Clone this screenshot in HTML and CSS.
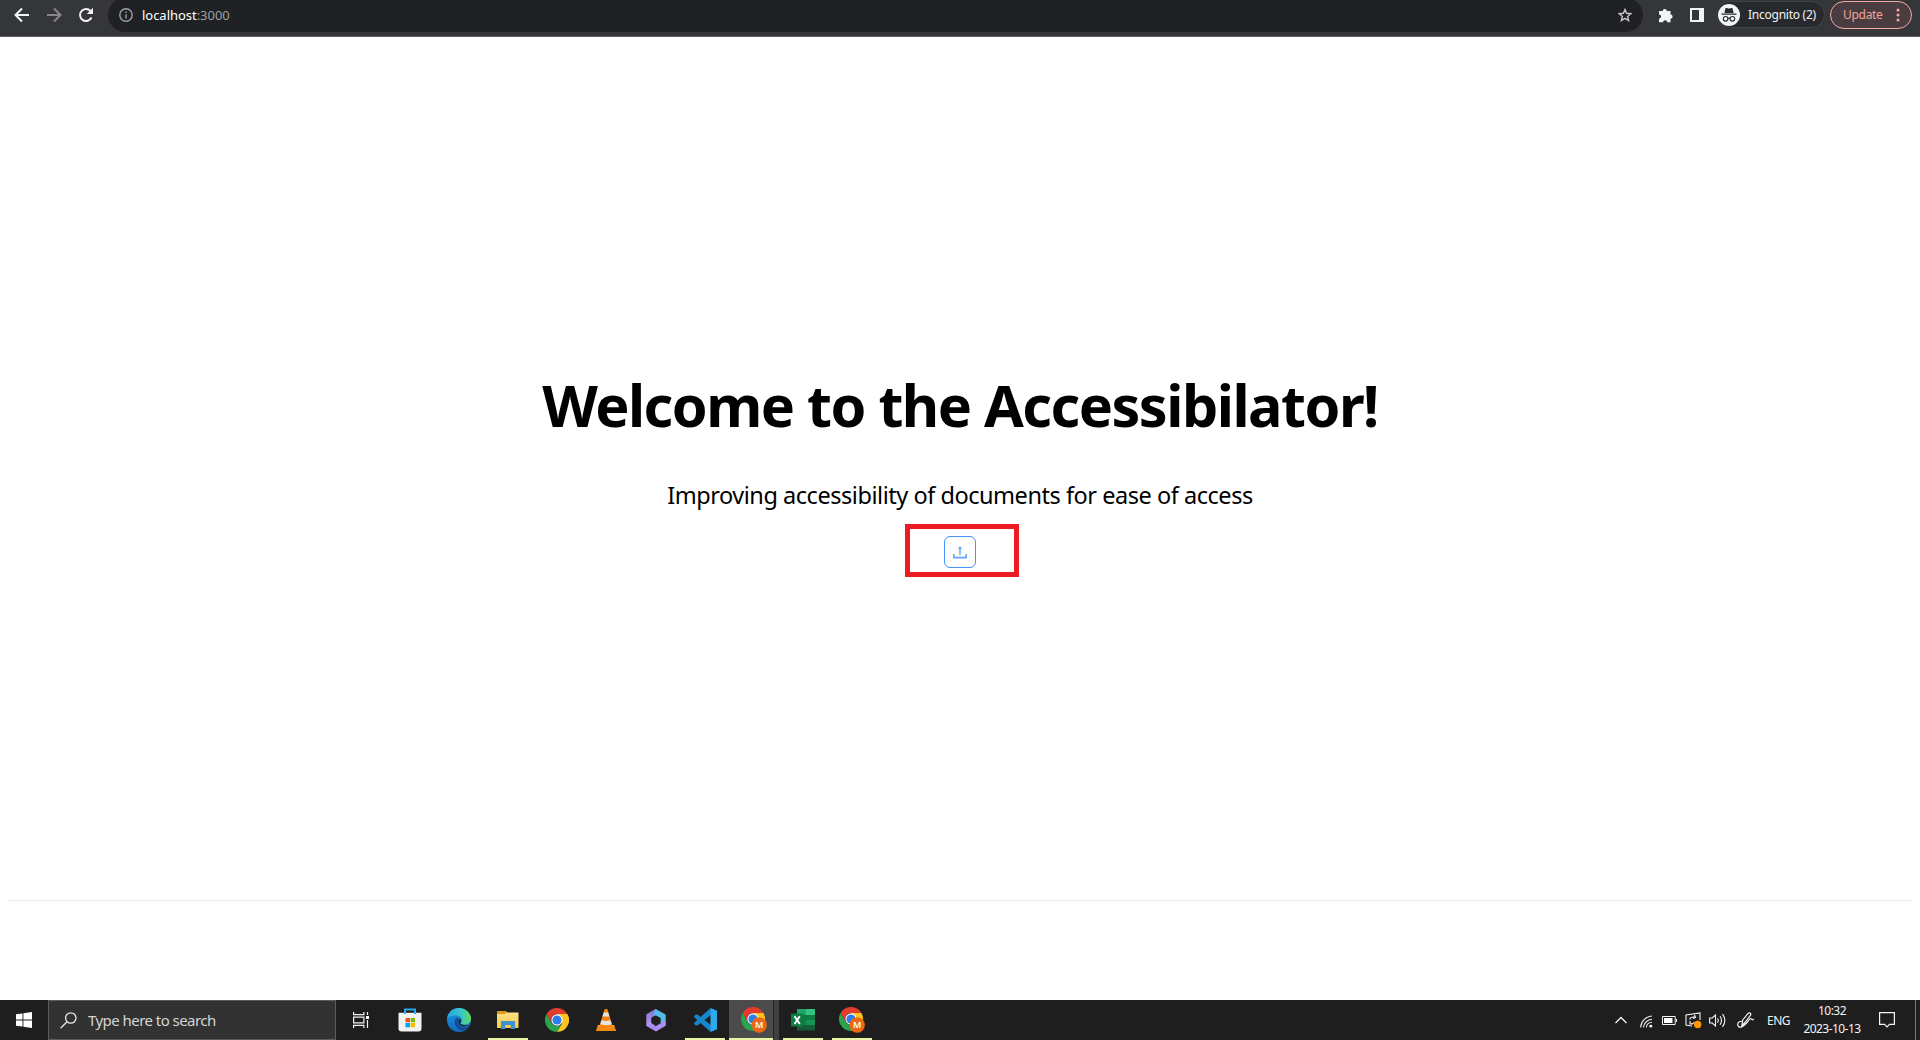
FILE: index.html
```html
<!DOCTYPE html>
<html lang="en">
<head>
<meta charset="utf-8">
<title>Accessibilator</title>
<link rel="stylesheet" href="styles.css">
</head>
<body>
<svg class="defs" width="0" height="0">
  <defs>
    <linearGradient id="edge" x1="0" y1="0" x2="1" y2="0"><stop offset="0" stop-color="#2ba6e4"/><stop offset=".6" stop-color="#36c6cb"/><stop offset="1" stop-color="#63db57"/></linearGradient>
    <linearGradient id="edgeBody" x1="0" y1="0" x2="0" y2="1"><stop offset="0" stop-color="#1b9de2"/><stop offset="1" stop-color="#1366bd"/></linearGradient>
    <linearGradient id="office" x1="0" y1="0" x2="0" y2="1"><stop offset="0" stop-color="#7f71d9"/><stop offset="1" stop-color="#c0a2f5"/></linearGradient>
    <linearGradient id="folder" x1="0" y1="0" x2="0" y2="1"><stop offset="0" stop-color="#ffe08a"/><stop offset="1" stop-color="#f9c846"/></linearGradient>
    <symbol id="chrome" viewBox="0 0 24 24">
      <path fill="#fcc31e" d="M12 6h10.4A12 12 0 0 1 12 24l5.2-9z"/>
      <path fill="#2ba24c" d="M1.6 6 6.8 15A6 6 0 0 0 17.200 15L12 24A12 12 0 0 1 1.600 6z"/>
      <path fill="#e33b2e" d="M1.600 6A12 12 0 0 1 22.400 6H12a6 6 0 0 0-5.200 9z"/>
      <circle cx="12" cy="12" r="5.700" fill="#fff"/><circle cx="12" cy="12" r="4.600" fill="#2f7ded"/>
    </symbol>
  </defs>
</svg>

<header class="toolbar">
  <nav class="nav">
    <svg width="16" height="16" fill="none" stroke="#f1f3f4" stroke-width="2"><path d="M15 8H2M8 1.500 1.500 8 8 14.500"/></svg>
    <svg width="16" height="16" fill="none" stroke="#86878a" stroke-width="2"><path d="M1 8h13M8 1.500 14.500 8 8 14.500"/></svg>
    <svg width="16" height="16" fill="none" stroke="#f1f3f4" stroke-width="2"><path d="M13.500 10.500A6 6 0 1 1 12.500 4"/><path fill="#f1f3f4" stroke="none" d="M15 .8V7H8.800z"/></svg>
  </nav>
  <div class="omnibox">
    <svg width="14" height="14" fill="none" stroke="#9aa0a6" stroke-width="1.400"><circle cx="7" cy="7" r="6.200"/><path d="M7 6.200V10.500M7 3.500V5"/></svg>
    <span class="url">localhost<span class="port">:3000</span></span>
    <svg class="star" width="14" height="14" fill="none" stroke="#c6c8cb" stroke-width="1.400"><path d="m7 1.500 1.600 3.800 4.200.4-3.200 2.700 1 4.100L7 10.300l-3.600 2.200 1-4.100L1.200 5.700l4.200-.4z"/></svg>
  </div>
  <svg class="puzzle" width="16" height="16" fill="#f1f3f4"><path d="M1 4h3.600a2.100 2.100 0 1 1 4.200 0H12.500v3.600a2.100 2.100 0 1 1 0 4.200v3.500H9.300a2.100 2.100 0 0 0-4.200 0H1v-3.600a2.100 2.100 0 0 0 0-4.200z"/></svg>
  <svg class="panel" width="14" height="14"><path fill="#f1f3f4" fill-rule="evenodd" d="M0 0h14v14H0zM2 2v10h7V2z"/></svg>
  <div class="incognito">
    <svg width="22" height="22"><circle cx="11" cy="11" r="11" fill="#f1f3f4"/><path fill="#292a2d" d="M7.500 4.200c1.200-.5 2 .4 3.500.4s2.300-.9 3.500-.4L15.600 9H6.400zM3.500 9.600h15v1.200h-15z"/><g fill="none" stroke="#292a2d" stroke-width="1.100"><circle cx="7.600" cy="14.800" r="2.300"/><circle cx="14.400" cy="14.800" r="2.300"/><path d="M9.900 14.500q1.100-.7 2.200 0"/></g></svg>
    <span>Incognito (2)</span>
  </div>
  <button class="update"><span>Update</span><svg width="4" height="14" fill="#f5aaa3"><circle cx="2" cy="2" r="1.500"/><circle cx="2" cy="7" r="1.500"/><circle cx="2" cy="12" r="1.500"/></svg></button>
</header>

<main class="page">
  <h1>Welcome to the Accessibilator!</h1>
  <p>Improving accessibility of documents for ease of access</p>
  <div class="highlight">
    <button class="upload"><svg width="14" height="13" fill="none" stroke="#62a5fb"><path stroke-width="1.600" d="M.8 8v3.600h12.400V8"/><path stroke-width="1.400" d="M7 9V2"/><path fill="#62a5fb" stroke="none" d="M7 0 9 3H5z"/></svg></button>
  </div>
  <hr>
</main>

<footer class="taskbar">
  <div class="start"><svg width="16" height="16" fill="#fff"><path d="M0 2.300 6.500 1.400V7.500H0zM7.400 1.200 16 0v7.500H7.400zM0 8.500h6.500v6.100L0 13.700zM7.400 8.500H16V16l-8.600-1.200z"/></svg></div>
  <div class="search">
    <svg width="17" height="17" fill="none" stroke="#e8e8e8" stroke-width="1.300"><circle cx="10.800" cy="6" r="5.200"/><path d="M7 9.800.6 16.200"/></svg>
    <span>Type here to search</span>
  </div>
  <div class="apps">
    <div class="view"><svg width="16" height="16" fill="none" stroke="#f3f3f3" stroke-width="1.200"><path d="M.600 0v2.600h10.300V0M.600 5.200h10.300v5.600H.600zM.600 16v-2.600h10.300V16M14.500 0v3M14.500 8v8"/><path fill="#fff" stroke="none" d="M13 4h3v3h-3z"/></svg></div>
    <div class="app"><svg width="24" height="24"><path d="M7 6V1.500h10V6" fill="none" stroke="#2aa8e6" stroke-width="2"/><path fill="#f2f2f2" d="M.500 4.800h23V20.500q0 3-3 3h-17q-3 0-3-3z"/><path fill="#2aa8e6" d="M6 4.800h2V6H6zM16 4.800h2V6h-2z"/><path fill="#f25022" d="M7.500 10H12v4.300H7.500z"/><path fill="#7fba00" d="M12.700 10h4.300v4.300h-4.300z"/><path fill="#00a4ef" d="M7.500 15H12v4.300H7.500z"/><path fill="#ffb900" d="M12.700 15h4.300v4.300h-4.300z"/></svg></div>
    <div class="app"><svg width="24" height="24"><circle cx="12" cy="12" r="12" fill="url(#edgeBody)"/><path fill="url(#edge)" d="M0 11C.800 4.500 5.500 0 12 0s12 5 12 10.500c0 4-3 6.200-6.200 6.200-2.600 0-4.400-.9-4.400-2 0-.8 1.300-1.200 1.300-3.200 0-2.400-2.300-4.300-5.600-4.300C5 7.200 1.500 8.500 0 11z"/><path fill="#114d99" d="M8.500 10.500C6 16 10 22.500 17 22.600c2-.9 4-2.400 5.400-4.500-5.400 2.400-11.400.2-11.600-4.100-.1-1.700.8-2.800 1.400-3.600-1.200-.9-2.900-.9-3.700.1z"/><path fill="#202020" d="M12.800 11c-.9.900-1.700 2-1.500 3.200.4 3.300 5.400 5.400 11.200 3q.8-.5 1.500-1.600V19l-1.600-.9c.5-.5.900-1 .6-.9-1.300.3-6.700.3-9.200-1.200-.6-.4-.7-1-.2-1.600 1-1.200 1.100-2.800-.8-3.400z"/></svg></div>
    <div class="app running"><svg width="24" height="24"><path fill="#d99b16" d="M1 3h9l1.500 2H22v7H1z"/><path fill="url(#folder)" d="M1 6h8l1.500-1.500H22.500V20H1z"/><path fill="#3e92d2" d="M5 13h14v8h-4.200v-4H9.200v4H5z"/></svg></div>
    <div class="app"><svg width="24" height="24"><use href="#chrome"/></svg></div>
    <div class="app"><svg width="24" height="24"><path fill="#f58a13" d="M4 17h16l2.200 6H1.800z"/><path fill="#ffad3b" d="M4 17h16l.5 1.300h-17z"/><path fill="#f58513" d="M10.700 1h2.600L18.500 18q-6.500 3.500-13 0z"/><path fill="#e6e4df" d="m9.700 4.500 4.600.100 1.100 4H8.500zM7.300 12.200q4.700 1.400 9.300 0l1.100 4q-5.700 2-11.400 0z"/></svg></div>
    <div class="app"><svg width="24" height="24"><path fill="url(#office)" d="M11.500 1 2.300 6.200v11.500L7 20.500l4.500-2.500-4-3V9.500L14 6V2.500z"/><path fill="#53bce9" d="m11.500 1 10.200 5.600v11L16.500 15v-5L9.500 6.500z"/><path fill="#a68df0" d="m12 23.500 9.700-5.700v-3.500L17 12v3l-5.500 3.200L7 15.500l-4.700 2.200z"/><path fill="#202020" d="m12 7.700 4.300 2.200v4.700L12 17l-4.500-2.300V10z"/></svg></div>
    <div class="app running"><svg width="24" height="24"><path fill="#1686cc" d="M17.500 0 .800 15.200l1.600 2.100 2 .100L18 7zM18 17 4.400 6.600l-2 .100L.800 8.800 17.500 24z"/><path fill="#2da9ef" d="M17.500 0 24 2.800v18.400L17.500 24z"/></svg></div>
    <div class="app active"><svg width="26" height="26"><use href="#chrome" width="24" height="24"/><circle cx="18.200" cy="18" r="7.700" fill="#ec6812"/><text class="initial" x="18.200" y="21">M</text></svg></div>
    <div class="app running excel"><svg width="24" height="24"><path fill="#21a366" d="M6 1h9v7H6z"/><path fill="#33c481" d="M15 1h9v6h-9z"/><path fill="#107c41" d="M6 7h9v10H6zM15 7h9v5h-9z"/><path fill="#159457" d="M15 12h9v5h-9z"/><path fill="#185c37" d="M6 17h18v5.500H6z"/><path fill="#107c41" d="M0 5.500h12.500v13H0z"/><path stroke="#fff" stroke-width="1.900" d="m3.500 8.200 5.300 7.800M8.800 8.200 3.500 16"/></svg></div>
    <div class="app running"><svg width="26" height="26"><use href="#chrome" width="24" height="24"/><circle cx="18.200" cy="18" r="7.700" fill="#ec6812"/><text class="initial" x="18.200" y="21">M</text></svg></div>
  </div>
  <div class="tray">
    <svg class="chevron" width="12" height="8" fill="none" stroke="#f3f3f3" stroke-width="1.300"><path d="m.5 7 5.500-5.500L11.500 7"/></svg>
    <svg class="wifi" width="13" height="13" fill="none" stroke="#e8e8e8" stroke-width="1.100"><path d="M.6 12.500A12 12 0 0 1 12 1M3.500 12.500A9 9 0 0 1 12 4.200M6.300 12.500A6 6 0 0 1 12 7.300"/><circle cx="10.800" cy="11.200" r="1.400" fill="#fff" stroke="none"/></svg>
    <svg class="battery" width="15" height="9" fill="none" stroke="#f3f3f3"><path d="M.5.500h12.700v8H.5zM14.500 3v3"/><path fill="#fff" stroke="none" d="M2 2h8.500v5H2z"/></svg>
    <svg class="sync" width="17" height="17" fill="none" stroke="#f3f3f3" stroke-width="1.100"><path d="M7 14 1 13V3l14-2v7M4.500 7.500q1-3 5-2.500M9.500 3l1 2.500L8 6.500M5 9v3h3M5 11.500q3 1 4.500-1.500"/><circle cx="12.700" cy="12.500" r="3.700" fill="#ff9800" stroke="none"/></svg>
    <svg class="volume" width="17" height="15" fill="none" stroke="#f3f3f3" stroke-width="1.100"><path d="M.6 5h2.600L6.500 2v11L3.200 10H.6zM8.500 5.200q1.600 2.300 0 4.600M11 3.200q3 4.300 0 8.600M13.500 1.200q4.700 6.300 0 12.600"/></svg>
    <svg class="pen" width="17" height="17" fill="none" stroke="#f3f3f3" stroke-width="1.200"><path d="M4.800 9.500C1.500 9-.5 12 1.500 14.500c2 2 6-1 8.500-4s3-5 4.500-3.500q1 1.700 2-.2M4.800 13.500l1-5.500L11 1.500q2-1.500 2.800.4 0 1.200-1 2.300L7.500 11z"/></svg>
    <span class="lang">ENG</span>
    <div class="clock"><span>10:32</span><span class="date">2023-10-13</span></div>
    <svg class="notice" width="16" height="16" fill="none" stroke="#f3f3f3" stroke-width="1.200"><path d="M.600.600h14.800v11.800h-4.900L8 15l-2.500-2.600H.600z"/></svg>
    <i class="desktop"></i>
  </div>
</footer>
</body>
</html>
```
FILE: styles.css
```css
* { box-sizing: border-box; }
body {
  margin: 0;
  width: 1920px;
  height: 1040px;
  overflow: hidden;
  display: flex;
  flex-direction: column;
  background: #fff;
  color: #000;
  font-family: "Noto Sans", "Open Sans", sans-serif;
}
svg { display: block; flex: none; }
span { white-space: nowrap; }
button { font: inherit; margin: 0; }
.defs { position: absolute; }

.toolbar {
  height: 37px;
  flex: none;
  display: flex;
  align-items: center;
  padding: 0 8px 7px 14px;
  background: #35363a;
  border-bottom: 1px solid #5d5e62;
  color: #f1f3f4;
  font-size: 12px;
}
.nav { display: flex; gap: 16px; width: 94px; }
.omnibox {
  width: 1535px;
  height: 34px;
  margin-top: 1px;
  display: flex;
  align-items: center;
  padding: 0 11px;
  border-radius: 17px;
  background: #202124;
  color: #fff;
}
.url { margin-left: 9px; font-size: 13px; letter-spacing: -.03px; }
.port { color: #9aa0a6; }
.star { margin-left: auto; }
.puzzle { margin-left: 15px; }
.panel { margin-left: 16px; }
.incognito {
  width: 109px;
  height: 27px;
  margin-left: 12px;
  display: flex;
  align-items: center;
  gap: 8px;
  padding-left: 1px;
  border: 1px solid #424347;
  border-radius: 14px;
  background: #28292c;
  letter-spacing: -.25px;
}
.update {
  width: 82px;
  height: 28px;
  margin-left: 5px;
  display: flex;
  align-items: center;
  justify-content: space-between;
  padding: 0 11px 0 12px;
  border: 1px solid #f5aaa3;
  border-radius: 14px;
  background: #493d41;
  color: #f5a199;
  letter-spacing: -.3px;
}

.page {
  flex: 1;
  display: flex;
  flex-direction: column;
  align-items: center;
  padding: 326px 8px 0;
}
h1 {
  margin: 0;
  font-size: 57.5px;
  line-height: 84px;
  font-weight: 700;
  letter-spacing: -1.5px;
  white-space: nowrap;
}
p {
  margin: 30px 0 0;
  font-size: 23.5px;
  line-height: 36px;
  letter-spacing: -.46px;
  white-space: nowrap;
}
.highlight {
  width: 114px;
  height: 53px;
  margin: 11px -4px 0 0;
  padding: 7px 34px 0;
  border: 5px solid #ed1c24;
}
.upload {
  width: 32px;
  height: 32px;
  display: grid;
  place-items: center;
  padding: 0;
  border: 1px solid #4096ff;
  border-radius: 6px;
  background: #fff;
}
hr {
  width: 100%;
  margin: 323px 0 0;
  border: 0;
  border-top: 1px solid #e8e8e8;
}

.taskbar {
  height: 40px;
  flex: none;
  display: flex;
  background: #1e1e1e;
  color: #f3f3f3;
}
.start { width: 48px; display: grid; place-items: center; }
.search {
  width: 288px;
  display: flex;
  align-items: center;
  gap: 11px;
  padding-left: 11px;
  border: 1px solid #5c5c5c;
  background: #323232;
  color: #d4d4d4;
  font-size: 15px;
}
.search span { letter-spacing: -.55px; }
.apps { display: flex; }
.view { width: 49px; display: grid; place-items: center; }
.app {
  width: 49.2px;
  display: grid;
  place-items: center;
  background: linear-gradient(#e6f5a4, #e6f5a4) center bottom / 0 2px no-repeat;
}
.running { background-size: 40px 2px; }
.active {
  background: linear-gradient(#e6f5a4, #e6f5a4) left bottom / 44px 2px no-repeat,
    linear-gradient(90deg, #4b4b4b 44px, #252525 44px, #252525 45px, #404040 45px);
}
.initial { font-size: 9px; font-weight: 600; fill: #fff; text-anchor: middle; }
.tray { margin-left: auto; display: flex; align-items: center; }
.wifi { margin: 3px 0 0 13px; }
.battery { margin: 1px 0 0 9px; }
.sync { margin-left: 8px; }
.volume { margin-left: 7px; }
.pen { margin-left: 11px; }
.lang { width: 24px; margin-left: 13px; font-size: 12px; letter-spacing: -.5px; }
.clock {
  width: 60px;
  margin-left: 11px;
  display: flex;
  flex-direction: column;
  align-items: center;
  font-size: 12px;
  line-height: 18px;
  letter-spacing: -.55px;
}
.notice { margin-left: 17px; }
.desktop { width: 5px; height: 40px; margin-left: 20px; border-left: 1px solid #777; }
```
